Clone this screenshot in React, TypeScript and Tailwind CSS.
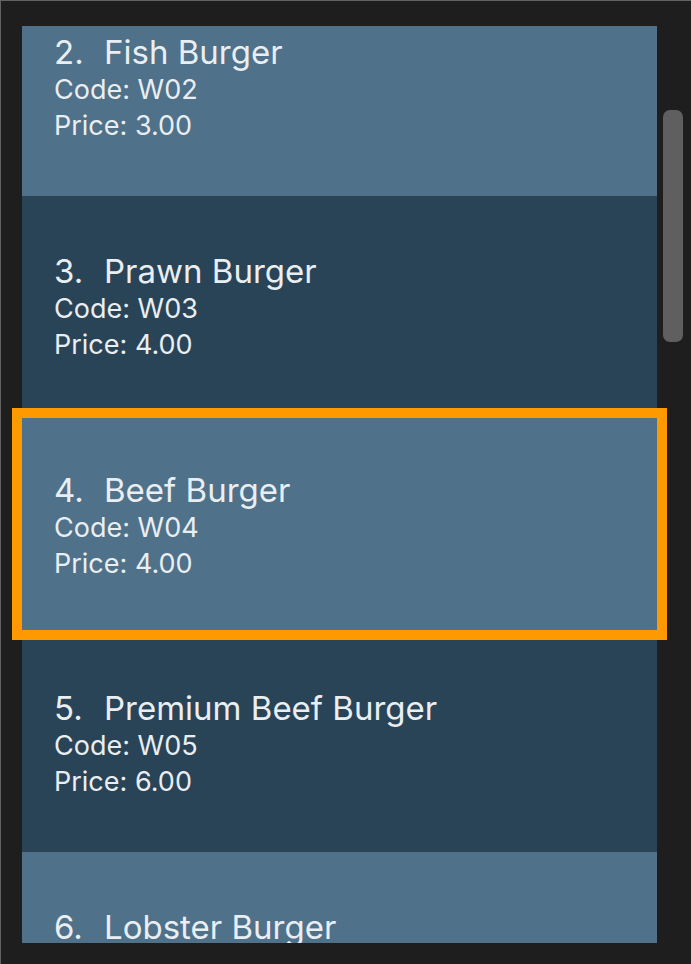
import React from "react";

interface MenuItem {
  index: number;
  name: string;
  code: string;
  price: string;
  top: string;
}

// top padding differs a little from cell to cell in the reference
const items: MenuItem[] = [
  { index: 2, name: "Fish Burger", code: "W02", price: "3.00", top: "pt-[48px]" },
  { index: 3, name: "Prawn Burger", code: "W03", price: "4.00", top: "pt-[55px]" },
  { index: 4, name: "Beef Burger", code: "W04", price: "4.00", top: "pt-[52px]" },
  { index: 5, name: "Premium Beef Burger", code: "W05", price: "6.00", top: "pt-[48px]" },
  { index: 6, name: "Lobster Burger", code: "W06", price: "7.00", top: "pt-[55px]" },
];

const SELECTED = 4;

const ItemCell = ({ item, first }: { item: MenuItem; first: boolean }) => {
  const selected = item.index === SELECTED;
  const bg = item.index % 2 === 0 ? "bg-[#4f7189]" : "bg-[#294357]";

  return (
    <div
      className={`${bg} ${item.top} shrink-0 flex flex-col pl-[32px] text-[#e9eef2] ${
        selected ? "-mx-[10px] h-[232px] border-[10px] border-[#ff9900]" : "h-[212px]"
      } ${first ? "-mt-[42px]" : ""}`}
    >
      <div className="flex items-baseline text-[33px] leading-[40px]">
        <span className="w-[50px]">{item.index}.</span>
        <span>{item.name}</span>
      </div>
      <div className="text-[27px] leading-[36px]">Code: {item.code}</div>
      <div className="text-[27px] leading-[36px]">Price: {item.price}</div>
    </div>
  );
};

export default function App() {
  return (
    <div
      className="w-[691px] h-[964px] bg-[#1e1e1e] border-t border-l border-[#626262] flex"
      style={{ fontFamily: "Inter, 'Noto Sans', sans-serif" }}
    >
      {/* list */}
      <div className="ml-[21px] mt-[25px] w-[635px] h-[917px] flex flex-col overflow-y-clip overflow-x-visible">
        {items.map((item, i) => (
          <ItemCell key={item.index} item={item} first={i === 0} />
        ))}
      </div>

      {/* scrollbar */}
      <div className="ml-[6px] mt-[109px] w-[20px] h-[232px] rounded-[7px] bg-[#5f5f5f]" />
    </div>
  );
}
